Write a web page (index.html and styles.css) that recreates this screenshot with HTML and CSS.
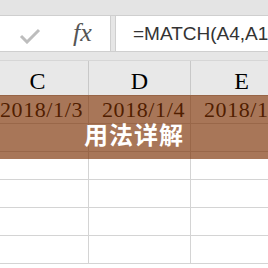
FILE: index.html
```html
<!DOCTYPE html>
<html lang="zh-CN">
<head>
  <meta charset="UTF-8" />
  <meta name="viewport" content="width=device-width, initial-scale=1.0" />
  <title>用法详解</title>
  <link rel="stylesheet" href="styles.css">
</head>
<body>
  <div class="page">
    <div class="topbar"></div>

    <div class="formula-bar">
      <div class="fx-box">
        <svg class="check" width="22" height="16" viewBox="0 0 22 16">
          <polyline points="2,8 8,14 20,2" fill="none" stroke="#bdbdbd" stroke-width="3" />
        </svg>
        <span class="fx">fx</span>
      </div>
      <div class="formula">=MATCH(A4,A1</div>
    </div>

    <div class="sheet">
      <div class="row head">
        <div class="cell">C</div>
        <div class="cell">D</div>
        <div class="cell">E</div>
      </div>
      <div class="row dates">
        <div class="cell">2018/1/3</div>
        <div class="cell">2018/1/4</div>
        <div class="cell">2018/1/5</div>
      </div>
      <div class="row"><div class="cell"></div><div class="cell"></div><div class="cell"></div></div>
      <div class="row"><div class="cell"></div><div class="cell"></div><div class="cell"></div></div>
      <div class="row"><div class="cell"></div><div class="cell"></div><div class="cell"></div></div>
      <div class="row"><div class="cell"></div><div class="cell"></div><div class="cell"></div></div>
      <div class="row"><div class="cell"></div><div class="cell"></div><div class="cell"></div></div>
    </div>

    <!-- title overlay on top of the sheet -->
    <div class="banner">用法详解</div>
  </div>
</body>
</html>
```

FILE: styles.css
```css
body {
  margin: 0;
  background-color: #fff;
}
.page {
  position: relative;
  width: 268px;
  height: 268px;
  overflow: hidden;
  background-color: #fff;
}
.topbar {
  height: 15px;
  background-color: #e4e4e4;
  border-bottom: 1px solid #cfcfcf;
}
.formula-bar {
  display: flex;
  gap: 4px;
  height: 35px;
  background-color: #e6e6e6;
  border-bottom: 1px solid #cfcfcf;
}
.fx-box {
  width: 110px;
  display: flex;
  align-items: center;
  background-color: #fff;
  border-right: 1px solid #cfcfcf;
}
.check {
  margin-left: 19px;
  margin-top: 4px;
}
.fx {
  margin-left: 32px;
  margin-top: -2px;
  font-family: "Liberation Serif", serif;
  font-style: italic;
  font-size: 26px;
  color: #555;
}
.formula {
  flex: 1;
  display: flex;
  align-items: center;
  padding-left: 17px;
  background-color: #fff;
  border-left: 1px solid #cfcfcf;
  font-family: "Liberation Sans", Arial, sans-serif;
  font-size: 19px;
  color: #333;
  white-space: nowrap;
  overflow: hidden;
}
.sheet {
  padding-top: 8px;
  background-color: #e6e6e6;
  margin-left: -13px;
}
.row {
  display: grid;
  grid-template-columns: 102px 102px 102px;
  height: 28px;
  background-color: #fff;
  border-bottom: 1px solid #d4d4d4;
  box-sizing: border-box;
}
.cell {
  border-right: 1px solid #d4d4d4;
  font-family: "Liberation Serif", serif;
  font-size: 22px;
  color: #000;
  white-space: nowrap;
  overflow: hidden;
}
.head {
  height: 36px;
  background-color: #e8e8e8;
  border-top: 1px solid #d6d6d6;
  border-bottom: 1px solid #cfcfcf;
}
.head .cell {
  display: flex;
  align-items: center;
  justify-content: center;
  padding-top: 6px;
  font-size: 24px;
  border-right-color: #c8c8c8;
}
.dates .cell {
  text-align: right;
  padding-right: 5px;
  line-height: 28px;
  letter-spacing: 0.6px;
}
.banner {
  position: absolute;
  left: 0;
  right: 0;
  top: 95px;
  height: 64px;
  display: flex;
  align-items: center;
  justify-content: center;
  padding-top: 12px;
  box-sizing: border-box;
  background-color: rgba(122, 46, 0, 0.655);
  font-family: "Noto Sans CJK SC", sans-serif;
  font-weight: bold;
  font-size: 24px;
  color: #fff;
  letter-spacing: 1px;
}
```
